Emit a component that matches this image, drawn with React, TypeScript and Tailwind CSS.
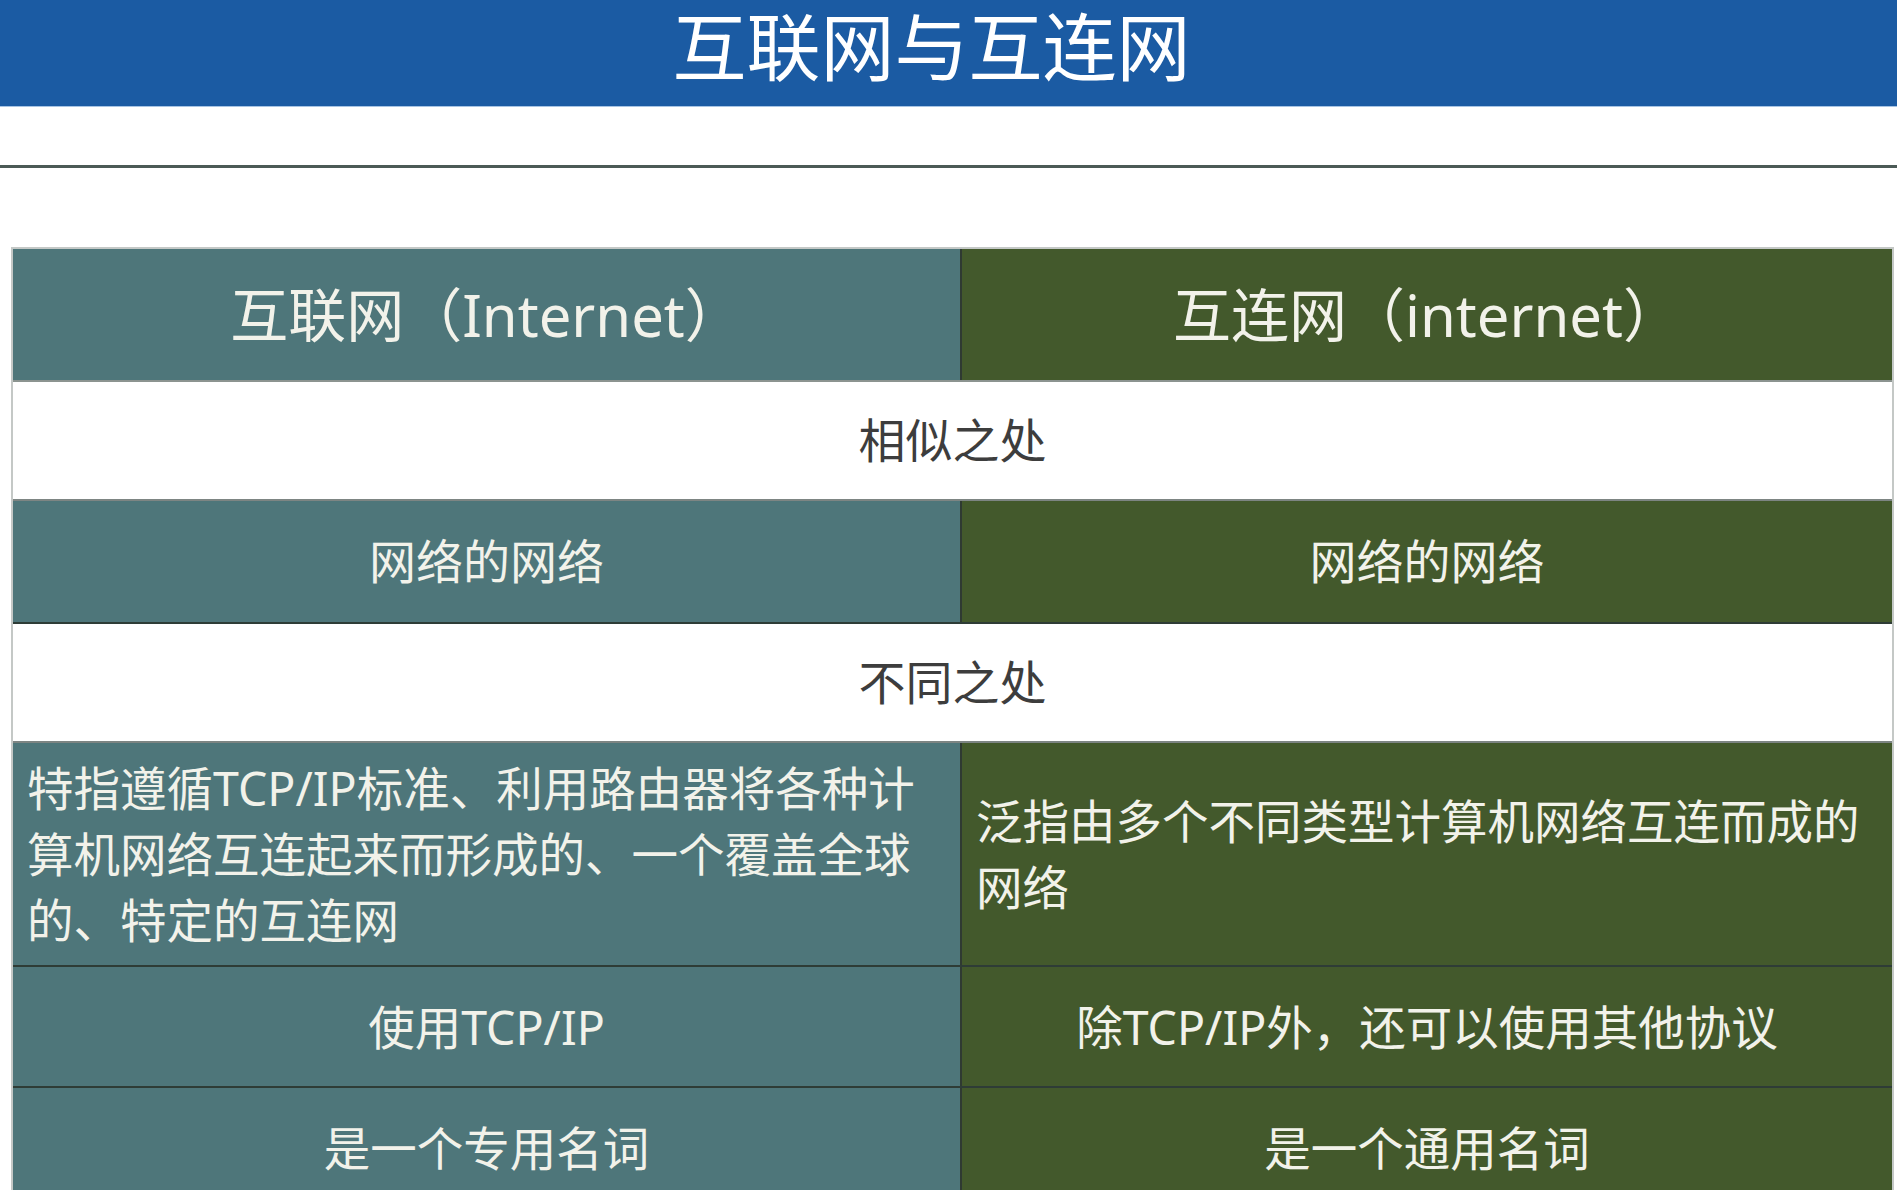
const font = "font-['Noto_Sans','Noto_Sans_CJK_SC',sans-serif]";

type Pair = { left: React.ReactNode; right: React.ReactNode; h: string };

const TEAL = "bg-[#4e767a]";
const GREEN = "bg-[#43592c]";

function SplitRow({ left, right, h, align = "center" }: Pair & { align?: "center" | "start" }) {
  const cell =
    align === "center"
      ? "flex items-center justify-center text-center"
      : "flex items-center justify-start pl-[14px] pr-3 text-left";
  return (
    <div className={`flex ${h} border-b-2 border-[#2e3c36]`}>
      <div className={`${cell} ${TEAL} w-[949px] border-r-2 border-[#2f3a32]`}>{left}</div>
      <div className={`${cell} ${GREEN} flex-1`}>{right}</div>
    </div>
  );
}

function LabelRow({ text, h }: { text: string; h: string }) {
  return (
    <div
      className={`flex ${h} items-center justify-center border-b-2 border-[#7d8583] bg-white text-[47px] text-[#3d3d3d]`}
    >
      {text}
    </div>
  );
}

export default function App() {
  return (
    <div className={`${font} h-[1190px] overflow-hidden bg-white`}>
      <div className="flex h-[107px] items-center justify-center border-b border-[#a7c4e4] bg-[#1b5ba3] pr-[34px] pb-[12px]">
        <h1 className="text-[74px] leading-[88px] font-normal text-white">互联网与互连网</h1>
      </div>
      <div className="mt-[58px] h-[3px] bg-[#4b5a56]" />

      <div className="mt-[79px] ml-[11px] mr-[3px] border-x-2 border-t-2 border-[#c4c8c6] text-[#f2f2ea]">
        <div className="flex h-[133px] border-b-2 border-[#8c9490] text-[58px]">
          <div className={`${TEAL} flex w-[949px] items-center justify-center border-r-2 border-[#2f3a32]`}>
            互联网（Internet）
          </div>
          <div className={`${GREEN} flex flex-1 items-center justify-center`}>互连网（internet）</div>
        </div>

        <LabelRow text="相似之处" h="h-[119px]" />

        <div className="text-[47px]">
          <SplitRow h="h-[123px]" left="网络的网络" right="网络的网络" />
        </div>

        <LabelRow text="不同之处" h="h-[119px]" />

        <div className="text-[46.5px] leading-[66px]">
          <SplitRow
            h="h-[224px]"
            align="start"
            left={
              <p>
                特指遵循TCP/IP标准、利用路由器将各种计
                <br />
                算机网络互连起来而形成的、一个覆盖全球
                <br />
                的、特定的互连网
              </p>
            }
            right={
              <p>
                泛指由多个不同类型计算机网络互连而成的
                <br />
                网络
              </p>
            }
          />
          <SplitRow h="h-[121px]" left="使用TCP/IP" right="除TCP/IP外，还可以使用其他协议" />
          <SplitRow h="h-[121px]" left="是一个专用名词" right="是一个通用名词" />
        </div>
      </div>
    </div>
  );
}
